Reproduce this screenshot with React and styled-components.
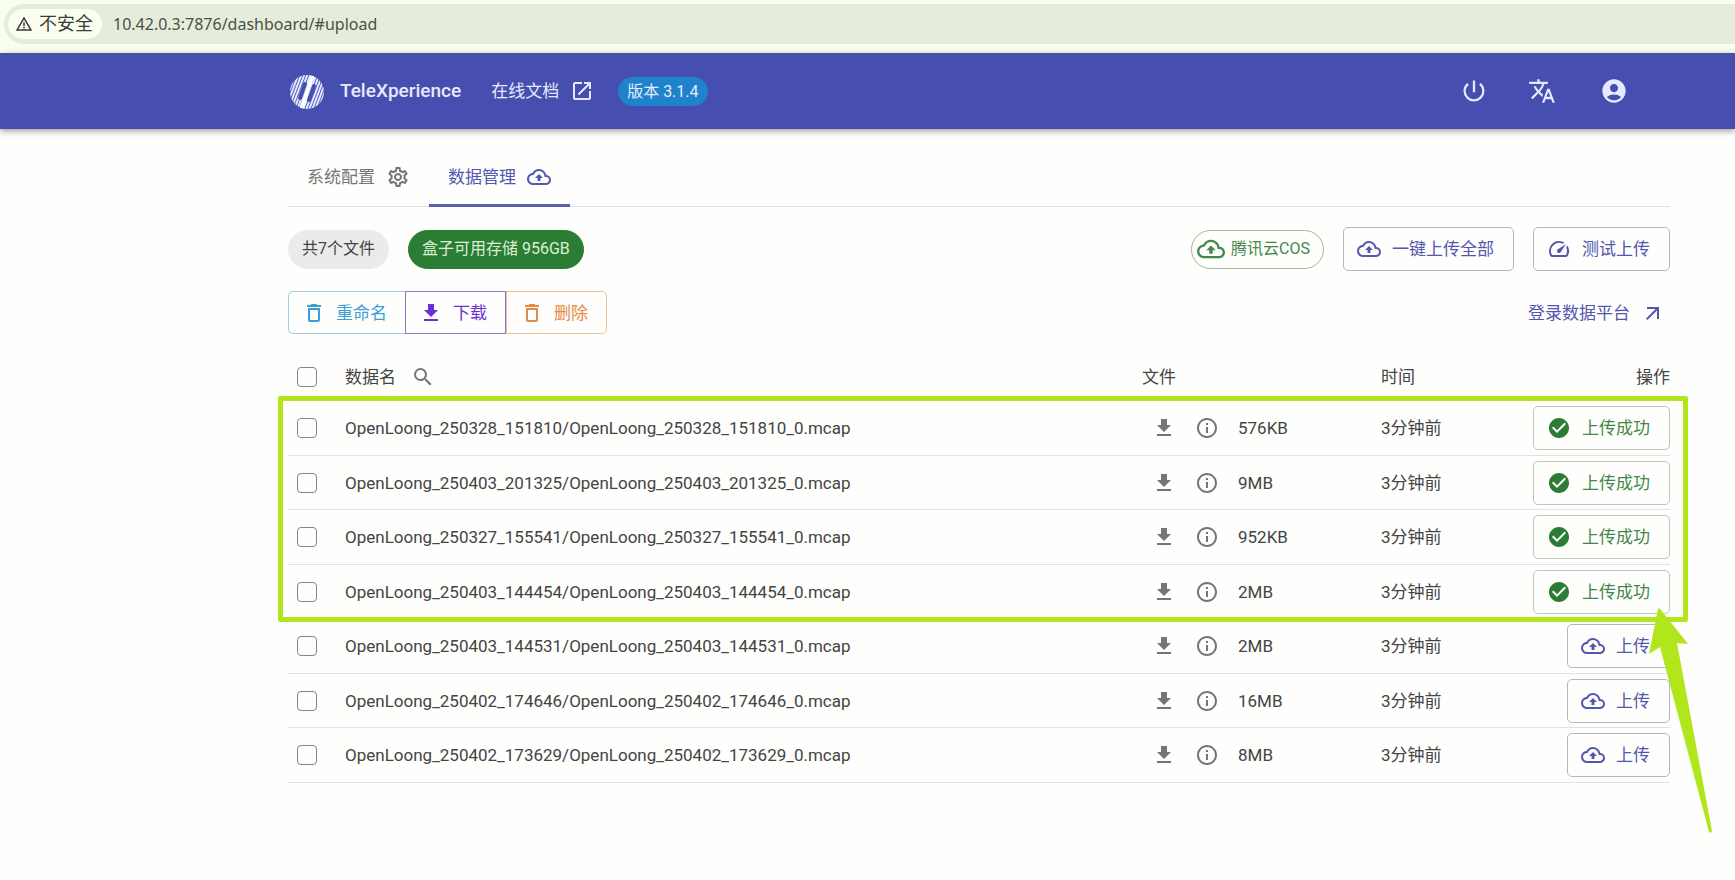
import React from "react";
import styled, { createGlobalStyle, css } from "styled-components";
import {
  MdWarningAmber,
  MdOutlineOpenInNew,
  MdPowerSettingsNew,
  MdTranslate,
  MdAccountCircle,
  MdOutlineSettings,
  MdOutlineBackup,
  MdOutlineSpeed,
  MdArrowOutward,
  MdDeleteOutline,
  MdDownload,
  MdSearch,
  MdOutlineInfo,
  MdCheckCircle,
} from "react-icons/md";

const color = {
  indigo: "#464eb0",
  indigoText: "#5357ad",
  green: "#2a7d32",
  greenText: "#43874a",
  grey: "#757575",
  text: "#444444",
  line: "#e2e2e2",
  mark: "#b2e61c",
};

const GlobalStyle = createGlobalStyle`
  * { box-sizing: border-box; }
  body {
    margin: 0;
    background: #fefefc;
    color: ${color.text};
    font-family: Roboto, "Noto Sans CJK SC", sans-serif;
    font-size: 17px;
    line-height: 24px;
  }
  button, input { font: inherit; }
  a { color: inherit; text-decoration: none; }
  svg { display: block; flex: none; }
`;

const AddressArea = styled.div`
  height: 53px;
  padding: 4px 0 9px 4px;
  background: #f9feee;
`;

const AddressBar = styled.div`
  display: flex;
  align-items: center;
  gap: 11px;
  height: 40px;
  padding-left: 4px;
  border-radius: 20px 0 0 20px;
  background: #e5ecdb;
`;

const SecurityChip = styled.button`
  display: flex;
  align-items: center;
  gap: 6px;
  height: 30px;
  padding: 0 9px 0 7px;
  border: 0;
  border-radius: 15px;
  background: #f9fef0;
  color: #3a3d36;
  font-size: 18px;
`;

const UrlInput = styled.input`
  flex: 1;
  min-width: 0;
  padding: 0;
  border: 0;
  outline: 0;
  background: transparent;
  color: #4b5145;
  font-family: "Noto Sans", sans-serif;
  font-size: 16px;
`;

const Header = styled.header`
  display: flex;
  align-items: center;
  height: 76px;
  padding: 0 107px 0 288px;
  background: ${color.indigo};
  color: #e6e9ff;
  box-shadow: 0 2px 6px rgba(40, 30, 40, 0.45);
`;

const Brand = styled.a`
  display: flex;
  align-items: center;
  gap: 15px;
  margin-right: 30px;
  font-size: 19px;
  font-weight: 500;
`;

const DocsLink = styled.a`
  display: flex;
  align-items: center;
  gap: 11px;
  margin-right: 24px;
`;

const VersionChip = styled.span`
  height: 29px;
  padding: 0 9px;
  border-radius: 15px;
  background: #1f83cc;
  font-size: 16px;
  line-height: 29px;
`;

const HeaderActions = styled.nav`
  display: flex;
  gap: 40px;
  margin-left: auto;
`;

const IconButton = styled.button`
  display: flex;
  padding: 0;
  border: 0;
  background: none;
  color: inherit;
`;

const AccountButton = styled(IconButton)`
  padding-left: 4px;
`;

const Main = styled.main`
  padding: 0 65px 96px 288px;
`;

const Tabs = styled.nav`
  display: flex;
  height: 78px;
  border-bottom: 1px solid ${color.line};
`;

const Tab = styled.a`
  display: flex;
  align-items: center;
  gap: 11px;
  height: 78px;
  padding: 20px 19px 0;
  border-bottom: 3px solid transparent;
  color: ${color.grey};
  ${(p) =>
    p.$active &&
    css`
      border-color: #5a5fb4;
      color: ${color.indigoText};
    `}
`;

const Toolbar = styled.div`
  display: flex;
  align-items: center;
  justify-content: space-between;
  padding-top: 20px;
`;

const Cluster = styled.div`
  display: flex;
  align-items: center;
  gap: 19px;
`;

const Chip = styled.span`
  display: flex;
  align-items: center;
  gap: 6px;
  height: 39px;
  padding: 0 13px;
  border: 1px solid #ebebeb;
  border-radius: 20px;
  background: #ebebeb;
  font-size: 16px;
  ${(p) =>
    p.$kind === "solid" &&
    css`
      border-color: ${color.green};
      background: ${color.green};
      color: #d9f0d6;
    `}
  ${(p) =>
    p.$kind === "outline" &&
    css`
      padding-left: 5px;
      border-color: #9fb8a2;
      background: none;
      color: ${color.greenText};
    `}
`;

const OutlineButton = styled.button`
  display: inline-flex;
  align-items: center;
  gap: 11px;
  height: 44px;
  padding: 0 19px 0 13px;
  border: 1px solid #b4b5cb;
  border-radius: 5px;
  background: none;
  color: ${(p) => (p.$done ? color.greenText : color.indigoText)};
  ${(p) => p.$done && "border-color: #bcc6bd;"}
  svg {
    color: ${(p) => (p.$done ? color.green : color.indigoText)};
  }
`;

const ButtonGroup = styled.div`
  display: flex;
`;

const tones = {
  blue: ["#3b9fd6", "#9ccbe3"],
  violet: ["#6a2fd8", "#8d76c9"],
  orange: ["#e58a42", "#ecbf96"],
};

const GroupButton = styled.button`
  display: flex;
  align-items: center;
  gap: 10px;
  height: 43px;
  padding: 0 18px 0 13px;
  border: 1px solid ${(p) => tones[p.$tone][1]};
  background: none;
  color: ${(p) => tones[p.$tone][0]};
  &:first-child { border-right: 0; border-radius: 5px 0 0 5px; }
  &:last-child { border-radius: 0 5px 5px 0; }
`;

const PlatformLink = styled.a`
  display: flex;
  align-items: center;
  gap: 11px;
  padding-right: 5px;
  color: ${color.indigoText};
`;

const TableArea = styled.section`
  position: relative;
  margin-top: 15px;
`;

const Table = styled.table`
  width: 100%;
  table-layout: fixed;
  border-collapse: separate;
  border-spacing: 0;
`;

const HeadCell = styled.th`
  height: 52px;
  padding: 3px 0 0;
  text-align: ${(p) => (p.$right ? "right" : "left")};
  font-weight: 400;
`;

const Row = styled.tr`
  height: 55px;
  &:nth-child(even) { height: 54px; }
`;

const Cell = styled.td`
  padding: 0;
  border-bottom: 1px solid ${color.line};
  text-align: ${(p) => (p.$right ? "right" : "left")};
  vertical-align: middle;
  white-space: nowrap;
`;

const Col = styled.col`
  width: ${(p) => p.$width};
`;

const CheckBox = styled.input`
  appearance: none;
  display: block;
  width: 20px;
  height: 20px;
  margin: 0 0 0 9px;
  border: 1px solid #858585;
  border-radius: 4px;
  background: #fefefe;
`;

const NameHead = styled.div`
  display: flex;
  align-items: center;
  gap: 15px;
`;

const FileInfo = styled.div`
  display: flex;
  align-items: center;
  gap: 19px;
  padding-left: 10px;
  svg { color: ${color.grey}; }
`;

const HighlightBox = styled.div`
  position: absolute;
  top: 47px;
  left: -10px;
  right: -18px;
  height: 226px;
  border: 5px solid ${color.mark};
  border-radius: 2px;
  pointer-events: none;
`;

const HighlightArrow = styled.svg`
  position: absolute;
  top: 259px;
  right: -42px;
  pointer-events: none;
`;

const files = [
  ["OpenLoong_250328_151810/OpenLoong_250328_151810_0.mcap", "576KB", true],
  ["OpenLoong_250403_201325/OpenLoong_250403_201325_0.mcap", "9MB", true],
  ["OpenLoong_250327_155541/OpenLoong_250327_155541_0.mcap", "952KB", true],
  ["OpenLoong_250403_144454/OpenLoong_250403_144454_0.mcap", "2MB", true],
  ["OpenLoong_250403_144531/OpenLoong_250403_144531_0.mcap", "2MB", false],
  ["OpenLoong_250402_174646/OpenLoong_250402_174646_0.mcap", "16MB", false],
  ["OpenLoong_250402_173629/OpenLoong_250402_173629_0.mcap", "8MB", false],
];

function Logo() {
  return (
    <svg width="37" height="37" viewBox="0 0 37 37" fill="none" stroke="#e4e8ff">
      <clipPath id="logo-disc">
        <circle cx="19" cy="19" r="17" />
      </clipPath>
      <g clipPath="url(#logo-disc)">
        <path
          strokeWidth="2"
          d="M8 0-6 37M11 0-3 37M14 0 0 37M17 0 3 37M20 0 6 37M23 0 9 37M26 0 12 37M29 0 15 37M32 0 18 37M35 0 21 37M38 0 24 37M41 0 27 37M44 0 30 37"
        />
        <path stroke={color.indigo} strokeWidth="4" strokeLinecap="round" d="M17 11 12 25M26 13 21 27" />
        <path stroke="#ffffff" strokeWidth="4" d="M25 2 13 36" />
      </g>
    </svg>
  );
}

export default function App() {
  return (
    <>
      <GlobalStyle />
      <AddressArea>
        <AddressBar>
          <SecurityChip type="button">
            <MdWarningAmber size={18} />
            不安全
          </SecurityChip>
          <UrlInput aria-label="地址" defaultValue="10.42.0.3:7876/dashboard/#upload" />
        </AddressBar>
      </AddressArea>
      <Header>
        <Brand href="#home">
          <Logo />
          TeleXperience
        </Brand>
        <DocsLink href="#docs">
          在线文档
          <MdOutlineOpenInNew size={24} />
        </DocsLink>
        <VersionChip>版本 3.1.4</VersionChip>
        <HeaderActions>
          <IconButton type="button" aria-label="电源"><MdPowerSettingsNew size={28} /></IconButton>
          <IconButton type="button" aria-label="语言"><MdTranslate size={28} /></IconButton>
          <AccountButton type="button" aria-label="账户"><MdAccountCircle size={28} /></AccountButton>
        </HeaderActions>
      </Header>
      <Main>
        <Tabs>
          <Tab href="#config">
            系统配置
            <MdOutlineSettings size={24} />
          </Tab>
          <Tab href="#upload" $active>
            数据管理
            <MdOutlineBackup size={24} />
          </Tab>
        </Tabs>
        <Toolbar>
          <Cluster>
            <Chip>共7个文件</Chip>
            <Chip $kind="solid">盒子可用存储 956GB</Chip>
          </Cluster>
          <Cluster>
            <Chip $kind="outline">
              <MdOutlineBackup size={28} />
              腾讯云COS
            </Chip>
            <OutlineButton type="button">
              <MdOutlineBackup size={24} />
              一键上传全部
            </OutlineButton>
            <OutlineButton type="button">
              <MdOutlineSpeed size={24} />
              测试上传
            </OutlineButton>
          </Cluster>
        </Toolbar>
        <Toolbar>
          <ButtonGroup>
            <GroupButton type="button" $tone="blue"><MdDeleteOutline size={24} />重命名</GroupButton>
            <GroupButton type="button" $tone="violet"><MdDownload size={24} />下载</GroupButton>
            <GroupButton type="button" $tone="orange"><MdDeleteOutline size={24} />删除</GroupButton>
          </ButtonGroup>
          <PlatformLink href="#platform">
            登录数据平台
            <MdArrowOutward size={24} />
          </PlatformLink>
        </Toolbar>
        <TableArea>
          <Table>
            <colgroup>
              <Col $width="57px" />
              <Col />
              <Col $width="239px" />
              <Col $width="144px" />
              <Col $width="145px" />
            </colgroup>
            <thead>
              <tr>
                <HeadCell><CheckBox type="checkbox" aria-label="全选" /></HeadCell>
                <HeadCell>
                  <NameHead>
                    数据名
                    <IconButton type="button" aria-label="搜索"><MdSearch size={24} color={color.grey} /></IconButton>
                  </NameHead>
                </HeadCell>
                <HeadCell>文件</HeadCell>
                <HeadCell>时间</HeadCell>
                <HeadCell $right>操作</HeadCell>
              </tr>
            </thead>
            <tbody>
              {files.map(([name, size, done]) => (
                <Row key={name}>
                  <Cell><CheckBox type="checkbox" aria-label={name} /></Cell>
                  <Cell>{name}</Cell>
                  <Cell>
                    <FileInfo>
                      <IconButton type="button" aria-label="下载"><MdDownload size={24} /></IconButton>
                      <IconButton type="button" aria-label="详情"><MdOutlineInfo size={24} /></IconButton>
                      {size}
                    </FileInfo>
                  </Cell>
                  <Cell>3分钟前</Cell>
                  <Cell $right>
                    <OutlineButton type="button" $done={done}>
                      {done ? <MdCheckCircle size={24} /> : <MdOutlineBackup size={24} />}
                      {done ? "上传成功" : "上传"}
                    </OutlineButton>
                  </Cell>
                </Row>
              ))}
            </tbody>
          </Table>
          <HighlightBox />
          <HighlightArrow width="63" height="226" viewBox="0 0 63 226" fill={color.mark}>
            <path d="M9 1Q10 -1 12 2L39 36 28 35 63 223Q62 226 60 224L11 39 0 46Z" />
          </HighlightArrow>
        </TableArea>
      </Main>
    </>
  );
}
